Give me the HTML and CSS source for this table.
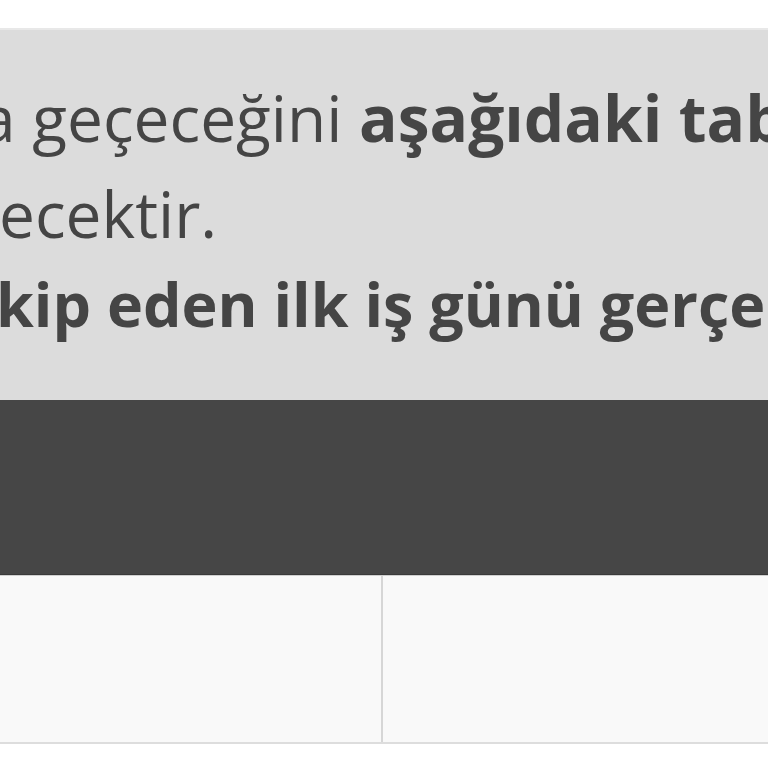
FILE: index.html
```html
<!DOCTYPE html>
<html lang="tr">
<head>
<meta charset="utf-8">
<link rel="stylesheet" href="styles.css">
</head>
<body>
<div class="page">
  <div class="notice">
    <p class="para first"><span class="cut-a">a geçeceğini <b>aşağıdaki tablo</b></span><br><span class="cut-b">ecektir.</span></p>
    <p class="para second"><b class="cut-c">kip eden ilk iş günü gerçekleşecektir.</b></p>
  </div>
  <div class="table">
    <div class="thead"></div>
    <div class="row">
      <div class="cell"></div>
      <div class="cell"></div>
    </div>
  </div>
</div>
</body>
</html>
```
FILE: styles.css
```css
html, body {
  margin: 0;
  padding: 0;
  background: #ffffff;
}
body {
  font-family: "Open Sans", "Liberation Sans", sans-serif;
  color: #454545;
  overflow: hidden;
}
.page {
  padding-top: 28px;
}
.notice {
  background: #dcdcdc;
  border-top: 2px solid #e8e8e8;
  padding: 40px 0 55px 0;
  white-space: nowrap;
  overflow: hidden;
}
.para {
  margin: 0;
  font-size: 64px;
}
.para b {
  font-weight: 700;
}
.first {
  line-height: 96px;
}
.second {
  font-size: 61px;
  line-height: 83px;
}
.cut-a {
  display: inline-block;
  margin-left: -20px;
}
.cut-b {
  display: inline-block;
  margin-left: -1px;
}
.cut-c {
  display: inline-block;
  margin-left: -4px;
}
.thead {
  height: 174px;
  background: #464646;
  border-bottom: 1px solid #3a3a3a;
}
.row {
  display: grid;
  grid-template-columns: 381px 1fr;
  height: 166px;
  background: #f9f9f9;
  border-top: 1px solid #d0d0d0;
  border-bottom: 2px solid #dddddd;
}
.cell + .cell {
  border-left: 2px solid #d6d6d6;
}
```
